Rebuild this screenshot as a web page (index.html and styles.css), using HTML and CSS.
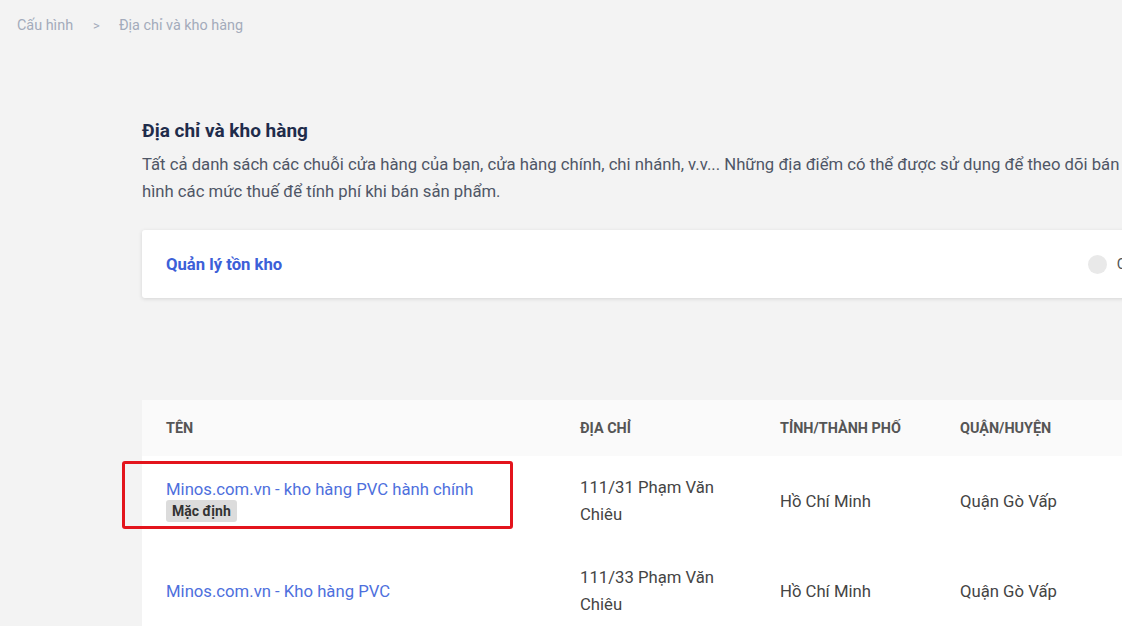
FILE: index.html
```html
<!DOCTYPE html>
<html lang="vi">
<head>
<meta charset="utf-8">
<title>Địa chỉ và kho hàng</title>
<link rel="stylesheet" href="styles.css">
</head>
<body>
<nav class="breadcrumb">
  <span class="crumb">Cấu hình</span>
  <span class="sep">&gt;</span>
  <span class="crumb">Địa chỉ và kho hàng</span>
</nav>
<main class="main">
  <section class="intro">
    <h1 class="title">Địa chỉ và kho hàng</h1>
    <p class="desc">Tất cả danh sách các chuỗi cửa hàng của bạn, cửa hàng chính, chi nhánh, v.v... Những địa điểm có thể được sử dụng để theo dõi bán hàng và cấu hình các mức thuế để tính phí khi bán sản phẩm.</p>
  </section>
  <div class="card">
    <span class="card-title">Quản lý tồn kho</span>
    <span class="switch"><span class="knob"></span><span class="switch-label">Cho phép</span></span>
  </div>
  <table class="table">
    <colgroup>
      <col class="c-name"><col class="c-addr"><col class="c-city"><col class="c-dist"><col class="c-rest">
    </colgroup>
    <thead>
      <tr><th>Tên</th><th>Địa chỉ</th><th>Tỉnh/Thành phố</th><th>Quận/Huyện</th><th></th></tr>
    </thead>
    <tbody>
      <tr>
        <td class="name-cell">
          <div class="highlight">
            <a class="link">Minos.com.vn - kho hàng PVC hành chính</a>
            <span class="badge">Mặc định</span>
          </div>
        </td>
        <td>111/31 Phạm Văn Chiêu</td>
        <td>Hồ Chí Minh</td>
        <td>Quận Gò Vấp</td>
        <td></td>
      </tr>
      <tr>
        <td class="name-cell"><a class="link">Minos.com.vn - Kho hàng PVC</a></td>
        <td>111/33 Phạm Văn Chiêu</td>
        <td>Hồ Chí Minh</td>
        <td>Quận Gò Vấp</td>
        <td></td>
      </tr>
    </tbody>
  </table>
</main>
</body>
</html>
```
FILE: styles.css
```css
*, *::before, *::after { box-sizing: border-box; }
html, body {
  margin: 0;
  height: 100%;
  overflow: hidden;
}
body {
  background: #f3f3f3;
  font-family: Roboto, "Liberation Sans", Arial, sans-serif;
  color: #444;
}
.breadcrumb {
  display: flex;
  align-items: center;
  padding: 17px 0 0 17px;
  font-size: 14.4px;
  line-height: 18px;
  color: #a3abbb;
}
.breadcrumb .sep {
  margin: 0 19px 0 20px;
  font-size: 13px;
}
.main {
  width: 1100px;
  margin: 0 0 0 142px;
  padding-top: 84px;
}
.title {
  margin: 0;
  font-size: 19px;
  line-height: 24px;
  font-weight: 700;
  color: #1f2c4b;
}
.desc {
  margin: 8px 0 0;
  font-size: 16.7px;
  line-height: 27px;
  color: #4f5666;
}
.card {
  margin-top: 25px;
  height: 68px;
  background: #fff;
  border-radius: 3px;
  box-shadow: 0 1px 4px rgba(0,0,0,0.12);
  display: flex;
  align-items: center;
  justify-content: space-between;
  padding: 0 0 0 24px;
}
.card-title {
  font-size: 16.7px;
  font-weight: 700;
  color: #3c60d8;
}
.switch {
  display: flex;
  align-items: center;
  gap: 10px;
  margin-right: 62px;
}
.knob {
  width: 19px;
  height: 19px;
  border-radius: 50%;
  background: #e9e9e9;
}
.switch-label {
  font-size: 15px;
  color: #555;
}
.table {
  margin-top: 102px;
  width: 100%;
  border-collapse: collapse;
  table-layout: fixed;
  background: #fff;
}
.c-name { width: 414px; }
.c-addr { width: 200px; }
.c-city { width: 180px; }
.c-dist { width: 180px; }
thead tr { background: #fafafa; }
th {
  height: 56px;
  padding: 0 24px;
  text-align: left;
  font-size: 14.4px;
  font-weight: 700;
  text-transform: uppercase;
  color: #555;
}
td {
  height: 90px;
  padding: 0 24px;
  font-size: 16.7px;
  line-height: 27px;
  color: #444;
  vertical-align: middle;
}
.highlight {
  position: relative;
  display: flex;
  flex-direction: column;
  align-items: flex-start;
}
.highlight::before {
  content: "";
  position: absolute;
  left: -44px;
  top: -19px;
  width: 391px;
  height: 68px;
  border: 3px solid #e3141c;
  border-radius: 3px;
}
.link {
  font-size: 16.7px;
  line-height: 20px;
  color: #4e6fdd;
  cursor: pointer;
}
.badge {
  padding: 0 6px;
  height: 22px;
  line-height: 22px;
  font-size: 14px;
  font-weight: 700;
  color: #333;
  background: #dcdcdc;
  border-radius: 3px;
}
```
